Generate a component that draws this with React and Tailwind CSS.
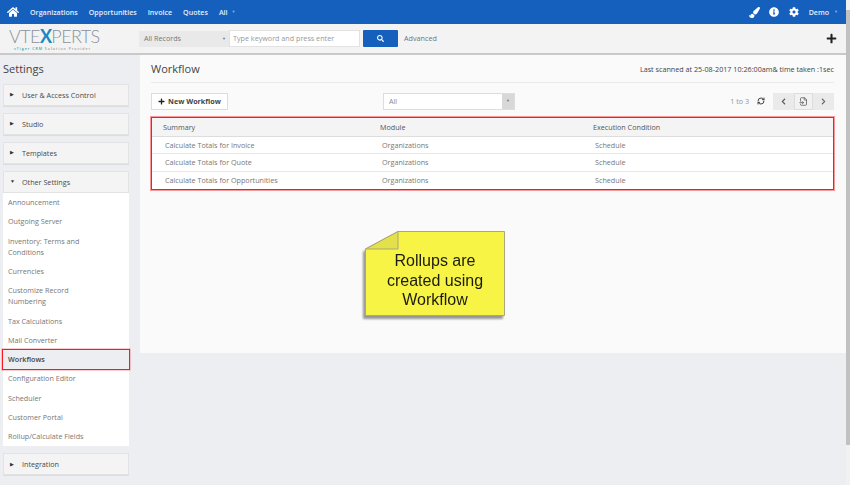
import { RefreshCw, FileInput } from "lucide-react";
import { FaHome, FaCog, FaInfoCircle, FaPaintBrush, FaPlus, FaSearch, FaChevronLeft, FaChevronRight } from "react-icons/fa";

const font = { fontFamily: '"Open Sans", sans-serif' };

const menuItems = [
  { label: "Announcement" },
  { label: "Outgoing Server" },
  { label: "Inventory: Terms and Conditions" },
  { label: "Currencies" },
  { label: "Customize Record Numbering" },
  { label: "Tax Calculations" },
  { label: "Mail Converter" },
  { label: "Workflows", active: true },
  { label: "Configuration Editor" },
  { label: "Scheduler" },
  { label: "Customer Portal" },
  { label: "Rollup/Calculate Fields" },
];

const rows = ["Calculate Totals for Invoice", "Calculate Totals for Quote", "Calculate Totals for Opportunities"];

function PanelHeader({ label, open }) {
  return (
    <div className="flex h-[22px] items-center border border-[#e3e3e3] bg-[#f4f4f4] pl-[6px] text-[7.2px] font-medium text-[#4a4a4a] shadow-[0_1px_0_#dcdcdc]">
      <span className="w-[12px] text-[5px] text-[#333]">{open ? "▼" : "▶"}</span>
      {label}
    </div>
  );
}

function TopBar() {
  return (
    <div className="flex h-[24px] items-center bg-[#1560bd] pl-[7px] pr-[8px] text-[7.1px] font-semibold text-[#e6eefa]">
      <FaHome size={12} className="text-white" />
      <div className="ml-[11px] flex items-center gap-[11px]">
        <span>Organizations</span>
        <span>Opportunities</span>
        <span>Invoice</span>
        <span>Quotes</span>
        <span className="flex items-center gap-[4px]">
          All <span className="text-[4px] text-[#8fb4e6]">▼</span>
        </span>
      </div>
      <div className="ml-auto flex items-center">
        <FaPaintBrush size={11} className="text-white" />
        <FaInfoCircle size={10} className="ml-[9px] text-white" />
        <FaCog size={10} className="ml-[10px] text-white" />
        <span className="ml-[10px]">Demo</span>
        <span className="ml-[5px] text-[4px] text-[#8fb4e6]">▼</span>
      </div>
    </div>
  );
}

function SearchBar() {
  return (
    <div className="flex h-[31px] items-center border-b-2 border-[#c9c9c9] bg-[#f3f3f3] pr-[9px]">
      <div className="w-[139px] pl-[9px]">
        <div className="flex items-baseline text-[18px] leading-[21px] tracking-[-0.6px] text-[#8a949c]" style={{ fontFamily: '"Lato", sans-serif', fontWeight: 300 }}>
          VTE<span className="font-bold text-[#1b86c4]">X</span>PERTS
        </div>
        <div className="pl-[5px] text-[3.5px] font-semibold leading-[4px] tracking-[1px] text-[#9a9a9a]">
          <span className="text-[#2aa3a8]">vTiger</span> <span className="text-[#2aa3a8]">CRM</span> Solution Provider
        </div>
      </div>
      <div className="flex h-[16px] w-[90px] items-center justify-between bg-[#e9e9e9] pl-[5px] pr-[3px] text-[7.2px] text-[#777]">
        All Records <span className="text-[4px]">▼</span>
      </div>
      <div className="flex h-[17px] w-[131px] items-center border border-[#e2e2e2] bg-white pl-[3px] text-[7.2px] text-[#999]">Type keyword and press enter</div>
      <div className="ml-[3px] flex h-[17px] w-[35px] items-center justify-center rounded-[1px] bg-[#1560bd]">
        <FaSearch size={7} className="text-white" />
      </div>
      <span className="ml-[6px] text-[7.2px] text-[#6d7480]">Advanced</span>
      <FaPlus size={11} className="ml-auto text-[#222]" />
    </div>
  );
}

function Sidebar() {
  return (
    <aside className="relative w-[140px] shrink-0 pl-[3px] pr-[11px]">
      <h2 className="mb-[6px] mt-[5px] h-[18px] text-[11px] leading-[18px] text-[#444]">Settings</h2>
      <PanelHeader label="User & Access Control" />
      <div className="mt-[7px]"><PanelHeader label="Studio" /></div>
      <div className="mt-[7px]"><PanelHeader label="Templates" /></div>
      <div className="mt-[7px]">
        <PanelHeader label="Other Settings" open />
        <ul className="bg-white text-[7.2px] leading-[11px] text-[#777]">
          {menuItems.map((item) => (
            <li key={item.label} className={`py-[4.15px] pl-[5px] pr-[40px] ${item.active ? "bg-[#eceef2] font-semibold text-[#444] outline outline-offset-0 outline-[#fb1a22] shadow-[0_0_0_1.5px_rgba(251,26,34,0.45)]" : ""}`}>
              {item.label}
            </li>
          ))}
        </ul>
      </div>
      <div className="mt-[7px]"><PanelHeader label="Integration" /></div>
    </aside>
  );
}

function WorkflowTable() {
  const cols = "grid grid-cols-[217px_213px_1fr]";
  return (
    <div className="border border-[#fb1a22] text-[7.2px] shadow-[0_0_0_1px_rgba(251,26,34,0.45)]">
      <div className={`${cols} h-[19px] items-center border-b border-[#ddd] bg-[#f4f4f4] pl-[11px] font-medium text-[#555]`}>
        <span>Summary</span>
        <span>Module</span>
        <span>Execution Condition</span>
      </div>
      {rows.map((row, i) => (
        <div key={row} className={`${cols} h-[17.3px] items-center bg-white pl-[13px] text-[#777] ${i < 2 ? "border-b border-[#e8e8e8]" : ""}`}>
          <span>{row}</span>
          <span>Organizations</span>
          <span>Schedule</span>
        </div>
      ))}
    </div>
  );
}

function Content() {
  return (
    <main className="h-[298px] flex-1 bg-[#fafafa] pl-[11px] pr-[12px]">
      <div className="flex h-[28px] items-center justify-between border-b border-[#eaeaea] pt-[1px]">
        <h1 className="text-[11px] text-[#444]">Workflow</h1>
        <span className="text-[7.2px] font-medium text-[#444]">Last scanned at 25-08-2017 10:26:00am&amp; time taken :1sec</span>
      </div>
      <div className="flex h-[34px] items-center pt-[2px]">
        <button className="flex h-[17px] w-[77px] items-center justify-center gap-[3px] border border-[#ddd] bg-white text-[7.2px] font-bold text-[#444]">
          <FaPlus size={7} className="text-[#222]" />
          New Workflow
        </button>
        <div className="ml-[155px] flex h-[17px] w-[132px] items-center justify-between border border-[#ddd] bg-white pl-[5px] text-[7.2px] text-[#888]">
          All
          <span className="flex h-full w-[12px] items-center justify-center bg-[#d8d8d8] text-[4px] text-[#777]">▼</span>
        </div>
        <span className="ml-auto text-[7.2px] text-[#8b95a3]">1 to 3</span>
        <RefreshCw size={8} strokeWidth={3} className="ml-[8px] text-[#444]" />
        <div className="ml-[8px] flex h-[17px] w-[61px] items-center bg-[#eaeaea]">
          <span className="flex flex-1 justify-center"><FaChevronLeft size={7} className="text-[#555]" /></span>
          <span className="flex h-full w-[19px] items-center justify-center border border-[#ddd] bg-[#f2f2f2]"><FileInput size={9} className="text-[#555]" /></span>
          <span className="flex flex-1 justify-center"><FaChevronRight size={7} className="text-[#666]" /></span>
        </div>
      </div>
      <WorkflowTable />
    </main>
  );
}

function StickyNote() {
  return (
    <div className="absolute left-[365px] top-[231px] h-[85px] w-[140px] drop-shadow-[-2px_3px_1px_rgba(0,0,0,0.4)]">
      <svg viewBox="0 0 140 85" className="absolute inset-0 h-full w-full">
        <polygon points="33,0.5 139.5,0.5 139.5,84.5 0.5,84.5 0.5,18" fill="#f7f445" stroke="#a8a87a" />
        <polygon points="33,0.5 33,18 0.5,18" fill="#e3e04a" stroke="#a8a87a" />
      </svg>
      <div className="absolute inset-x-0 top-[20px] text-center text-[16px] leading-[19.5px] text-[#1c1c10]" style={{ fontFamily: '"Liberation Sans", sans-serif' }}>
        Rollups are<br />created using<br />Workflow
      </div>
    </div>
  );
}

function ScrollBar() {
  return (
    <div className="absolute inset-y-0 right-0 flex w-[4px] flex-col bg-[#f1f1f1]">
      <div className="mt-[10px] h-[435px] bg-[#c1c1c1]" />
    </div>
  );
}

export default function App() {
  return (
    <div className="relative h-[485px] w-[850px] overflow-hidden bg-[#eceef2] pr-[4px]" style={font}>
      <TopBar />
      <SearchBar />
      <div className="flex">
        <Sidebar />
        <Content />
      </div>
      <StickyNote />
      <ScrollBar />
    </div>
  );
}
